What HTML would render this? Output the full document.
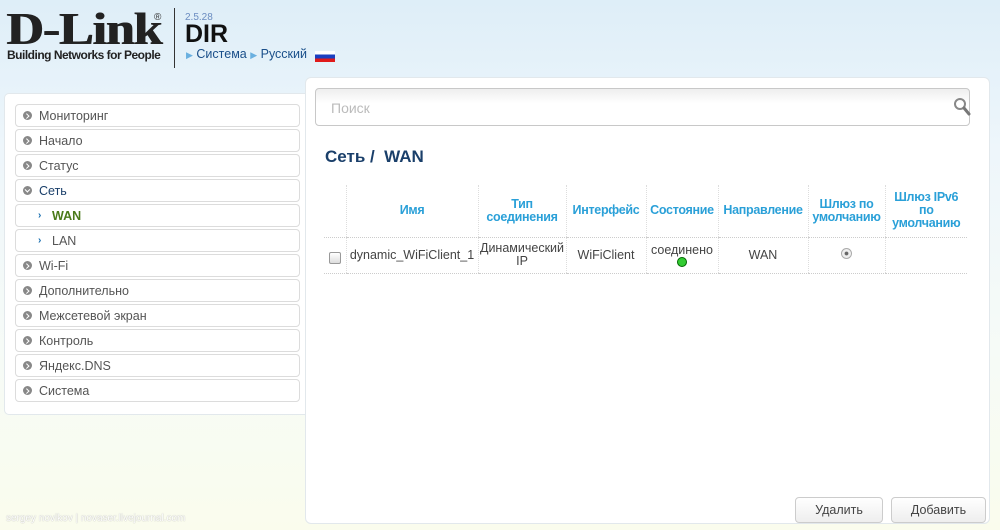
<!DOCTYPE html>
<html><head><meta charset="utf-8"><style>
*{box-sizing:border-box;margin:0;padding:0}
body{width:1000px;height:530px;overflow:hidden;font-family:"Liberation Sans",sans-serif;background:linear-gradient(#deeef8 0px,#eef6fb 150px,#f6fbf7 350px,#fafced 530px);position:relative}
.abs{position:absolute}
.side{left:4px;top:93px;width:301px;height:322px;background:#fff;border:1px solid #e2e8ec;border-radius:5px 0 0 5px;border-right:none}
.item{position:absolute;left:10px;width:285px;height:23px;border:1px solid #dcdcdc;border-radius:4px;font-size:12.5px;color:#555;line-height:22px;padding-left:23px;background:#fff}
.item i{position:absolute;left:7px;top:6px;width:9px;height:9px;border-radius:50%;background:#888}
.item i:after{content:"";position:absolute;left:2px;top:2.5px;width:2.5px;height:2.5px;border-right:1.3px solid #fff;border-top:1.3px solid #fff;transform:rotate(45deg)}
.item.dn i:after{transform:rotate(135deg);left:2.5px;top:1.5px}
.sub{padding-left:36px}
.sub b{position:absolute;left:22px;top:0;color:#1a6fb0;font-size:10px}
.main{left:305px;top:77px;width:685px;height:447px;background:#fff;border:1px solid #e2e8ec;border-radius:6px}
table{border-collapse:collapse;position:absolute;left:324px;top:185px;font-size:12.5px}
th{color:#2aa0d8;font-weight:bold;font-size:12.5px;line-height:13px;border-left:1px dotted #ddd;height:52px;border-bottom:1px dotted #ccc;letter-spacing:-0.3px}
td{color:#444;text-align:center;border-left:1px dotted #ddd;height:36px;border-bottom:1px dotted #ccc;line-height:13px}
th:first-child,td:first-child{border-left:none}
.btn{position:absolute;top:497px;height:26px;border:1px solid #ccc;border-radius:4px;background:linear-gradient(#fff,#eee);font-size:12.5px;color:#444;text-align:center;line-height:24px}
</style></head><body>
<div class="abs" style="left:6px;top:8px;font-family:'Liberation Serif',serif;font-weight:bold;font-size:46px;letter-spacing:-1px;color:#222;line-height:42px;transform:scaleX(1.13);transform-origin:left;text-shadow:1px 0 0 #222">D-Link</div>
<div class="abs" style="left:154px;top:12px;font-size:10px;color:#333">®</div>
<div class="abs" style="left:7px;top:48px;font-size:12px;font-weight:bold;color:#222;letter-spacing:-0.5px">Building Networks for People</div>
<div class="abs" style="left:174px;top:8px;width:1px;height:60px;background:#333"></div>
<div class="abs" style="left:185px;top:12px;font-size:10px;color:#6a8cc0">2.5.28</div>
<div class="abs" style="left:185px;top:20px;font-size:25px;font-weight:bold;color:#111">DIR</div>
<div class="abs" style="left:186px;top:47px;font-size:12.5px;color:#1a4f8a"><span style="color:#6ab0e0;font-size:9px">▶</span> Система <span style="color:#6ab0e0;font-size:9px">▶</span> Русский</div>
<div class="abs" style="left:315px;top:51px;width:20px;height:11px;background:linear-gradient(#fff 0 33%,#1a3fc0 33% 66%,#e01a1a 66%)"></div>

<div class="abs side"></div>
<div class="item" style="top:104px;left:15px"><i></i>Мониторинг</div>
<div class="item" style="top:129px;left:15px"><i></i>Начало</div>
<div class="item" style="top:154px;left:15px"><i></i>Статус</div>
<div class="item dn" style="top:179px;left:15px;color:#1a3f6a"><i></i>Сеть</div>
<div class="item sub" style="top:204px;left:15px;color:#4a7a1a;font-weight:bold"><b>›</b>WAN</div>
<div class="item sub" style="top:229px;left:15px"><b>›</b>LAN</div>
<div class="item" style="top:254px;left:15px"><i></i>Wi-Fi</div>
<div class="item" style="top:279px;left:15px"><i></i>Дополнительно</div>
<div class="item" style="top:304px;left:15px"><i></i>Межсетевой экран</div>
<div class="item" style="top:329px;left:15px"><i></i>Контроль</div>
<div class="item" style="top:354px;left:15px"><i></i>Яндекс.DNS</div>
<div class="item" style="top:379px;left:15px"><i></i>Система</div>

<div class="abs main"></div>
<div class="abs" style="left:315px;top:88px;width:655px;height:38px;border:1px solid #c8c8c8;border-radius:4px;background:linear-gradient(#eee,#fff 40%);font-size:14px;color:#bbb;line-height:38px;padding-left:15px">Поиск</div>
<svg class="abs" style="left:952px;top:96px" width="20" height="22"><circle cx="8" cy="8" r="5" fill="none" stroke="#888" stroke-width="2"/><path d="M12 12 L17 18" stroke="#777" stroke-width="3" stroke-linecap="round"/></svg>
<div class="abs" style="left:325px;top:147px;font-size:17px;font-weight:bold;color:#1a3f6a">Сеть / &nbsp;WAN</div>

<table>
<tr><th style="width:22px"></th><th style="width:132px">Имя</th><th style="width:88px">Тип<br>соединения</th><th style="width:80px">Интерфейс</th><th style="width:72px">Состояние</th><th style="width:90px">Направление</th><th style="width:77px">Шлюз по<br>умолчанию</th><th style="width:82px">Шлюз IPv6<br>по<br>умолчанию</th></tr>
<tr><td><span style="display:inline-block;width:12px;height:12px;border:1px solid #999;border-radius:2px;background:linear-gradient(#fff,#ddd);margin-top:8px"></span></td><td>dynamic_WiFiClient_1</td><td>Динамический<br>IP</td><td>WiFiClient</td><td style="vertical-align:top;padding-top:6px">соединено<br><span style="display:inline-block;width:10px;height:10px;border-radius:50%;background:#3c3;border:1px solid #060"></span></td><td>WAN</td><td><span style="display:inline-block;width:11px;height:11px;border-radius:50%;border:1px solid #aaa;background:radial-gradient(#666 25%,#eee 35%)"></span></td><td></td></tr>
</table>

<div class="btn" style="left:795px;width:88px">Удалить</div>
<div class="btn" style="left:891px;width:95px">Добавить</div>
<div class="abs" style="left:6px;top:513px;font-size:10px;color:#fff;text-shadow:0 0 1px #999">sergey novikov | novaser.livejournal.com</div>
</body></html>
